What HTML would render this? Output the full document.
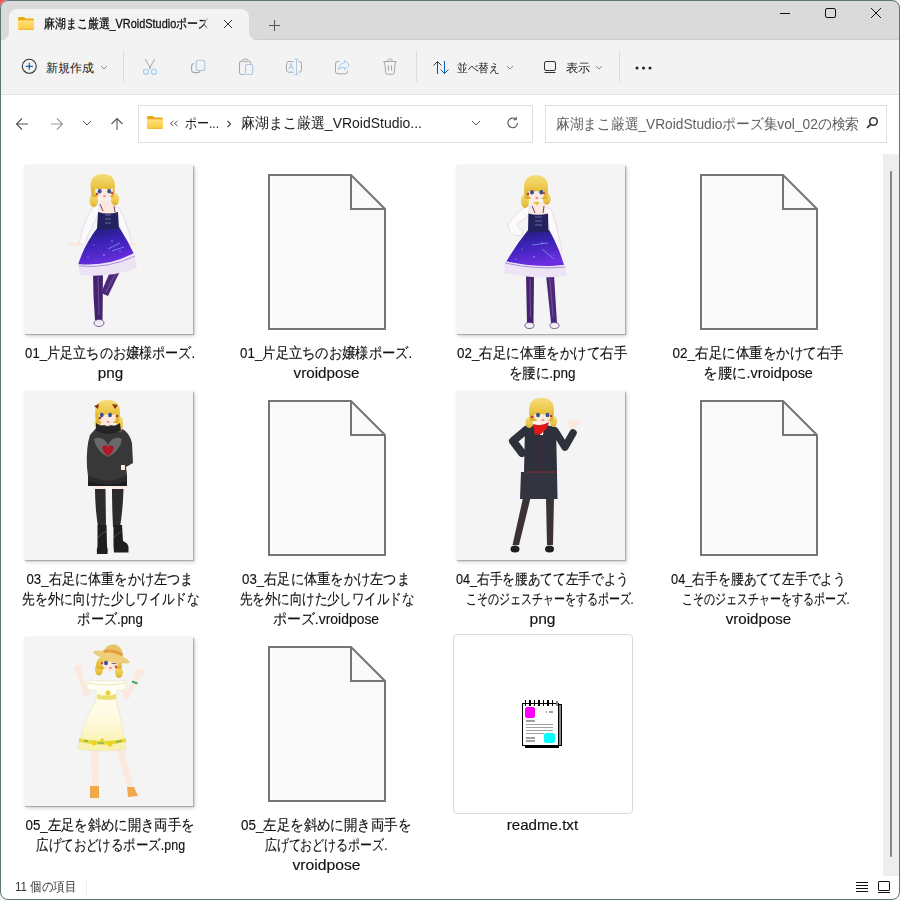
<!DOCTYPE html><html><head><meta charset="utf-8"><style>
*{box-sizing:border-box;margin:0;padding:0}
html,body{width:900px;height:900px;overflow:hidden;background:#eaf4f4}
#corner{position:absolute;left:0;top:0;width:8px;height:8px;background:#f05050}
body{font-family:"Liberation Sans",sans-serif;color:#1b1b1b;position:relative}
#win{position:absolute;left:0;top:0;width:900px;height:900px;border-radius:8px;overflow:hidden;background:#fff}
#frame{position:absolute;left:0;top:0;width:900px;height:900px;border:1px solid #607474;border-radius:8px}
#tabs{position:absolute;left:0;top:0;width:900px;height:40px;background:#dadada;border-bottom:1px solid #cdcdcd}
#tab{position:absolute;left:9px;top:9px;width:240px;height:31px;background:#f3f3f3;border-radius:8px 8px 0 0}
#tab:before,#tab:after{content:"";position:absolute;bottom:0;width:8px;height:8px}
#tab:before{left:-8px;background:radial-gradient(circle at 0 0,transparent 7.5px,#f3f3f3 8.5px)}
#tab:after{right:-8px;background:radial-gradient(circle at 100% 0,transparent 7.5px,#f3f3f3 8.5px)}
#cmd{position:absolute;left:0;top:40px;width:900px;height:55px;background:#f3f3f3;border-bottom:1px solid #e3e3e3}
.box{position:absolute;border:1px solid #dfdfdf;background:#fff}
.t{position:absolute;white-space:nowrap;line-height:20px;transform-origin:0 50%}
.sep{position:absolute;width:1px;background:#dcdcdc}
.lbl{position:absolute;text-align:center;font-size:15px;line-height:20px;color:#111;white-space:nowrap;width:216px;-webkit-text-stroke:0.15px #111}
.thumb{position:absolute;width:169px;height:169px;background:#f4f4f4;box-shadow:1px 1px 1px rgba(0,0,0,.22),2px 2px 4px rgba(0,0,0,.18)}
svg{position:absolute;overflow:visible}
</style></head><body><div id="corner"></div><div id="win">
<div id="tabs"></div><div id="tab"></div><div id="cmd"></div>
<svg style="left:18px;top:17px" width="16" height="13" viewBox="0 0 16 13"><defs><linearGradient id="fg18_17" x1="0" y1="0" x2="0" y2="1"><stop offset="0" stop-color="#ffe17a"/><stop offset="1" stop-color="#fbc93f"/></linearGradient></defs><path d="M0 1.5 Q0 0 1.5 0 H5.2 Q6 0 6.6 0.6 L7.6 1.6 H14.5 Q16 1.6 16 3 V5 H0Z" fill="#e9a90f"/><path d="M0 3.2 H16 V11.5 Q16 13 14.5 13 H1.5 Q0 13 0 11.5Z" fill="url(#fg18_17)"/><path d="M0.6 12.3 H15.4" stroke="#e9b030" stroke-width="1" opacity=".7"/></svg>
<div style="position:absolute;left:44px;top:10px;width:165px;height:28px;overflow:hidden;-webkit-mask-image:linear-gradient(90deg,#000 96%,transparent 100%)"><div class="t" id="ttl" style="left:0px;top:4px;font-size:13px;color:#111;transform:scaleX(0.8397);-webkit-text-stroke:0.3px #111;">麻湖まこ厳選_VRoidStudioポーズ</div></div>
<svg style="left:223px;top:19px" width="10" height="10" viewBox="0 0 10 10"><path d="M1 1L9 9M9 1L1 9" stroke="#333" stroke-width="1"/></svg>
<svg style="left:268px;top:19px" width="12" height="12" viewBox="0 0 12 12"><path d="M6.5 1V12M1 6.5H12" stroke="#555" stroke-width="1"/></svg>
<svg style="left:779px;top:12px" width="12" height="3" viewBox="0 0 12 3"><path d="M1 1.5H11" stroke="#111" stroke-width="1"/></svg>
<svg style="left:824px;top:7px" width="12" height="12" viewBox="0 0 12 12"><rect x="1.5" y="1.5" width="10" height="9" rx="1.5" fill="none" stroke="#111" stroke-width="1"/></svg>
<svg style="left:870px;top:7px" width="12" height="12" viewBox="0 0 12 12"><path d="M1 1L11 11M11 1L1 11" stroke="#111" stroke-width="1"/></svg>
<svg style="left:21px;top:58px" width="17" height="17" viewBox="0 0 17 17"><circle cx="8.3" cy="8.3" r="7" fill="none" stroke="#333" stroke-width="1.1"/><path d="M8.3 4.8V11.8M4.8 8.3H11.8" stroke="#0a64b4" stroke-width="1.2"/></svg>
<div class="t" id="new" style="left:46px;top:58px;font-size:12px;color:#1b1b1b;transform:scaleX(1.0000);">新規作成</div>
<svg style="left:100px;top:65px" width="8" height="5.0" viewBox="0 0 8 5.0"><path d="M1 1L4.0 4.0L7 1" fill="none" stroke="#8a8a8a" stroke-width="1"/></svg>
<div class="sep" style="left:123px;top:51px;height:31px"></div>
<svg style="left:142px;top:58px" width="17" height="18" viewBox="0 0 17 18"><path d="M3.3 1L8.6 10.8M12.7 1L7.4 10.8" stroke="#a6a6a6" stroke-width="1" fill="none"/><circle cx="4" cy="13.8" r="2.6" stroke="#a9c8e6" stroke-width="1.1" fill="#eaf3fa"/><circle cx="12" cy="13.8" r="2.6" stroke="#a9c8e6" stroke-width="1.1" fill="#eaf3fa"/></svg>
<svg style="left:190px;top:59px" width="17" height="16" viewBox="0 0 17 16"><path d="M4.2 4.5 Q1.6 5 1.6 7.5 V11 Q1.6 13.6 4.5 13.6 H7.5 Q9.6 13.6 10.2 12" stroke="#a6a6a6" stroke-width="1.05" fill="none"/><rect x="6.2" y="1.3" width="8.6" height="10.2" rx="2.3" stroke="#a9c8e6" stroke-width="1.1" fill="none"/></svg>
<svg style="left:238px;top:58px" width="17" height="18" viewBox="0 0 17 18"><path d="M4.3 3.2 H3.3 Q1.5 3.2 1.5 5 V14.7 Q1.5 16.5 3.3 16.5 H6.6" stroke="#a6a6a6" stroke-width="1" fill="none"/><path d="M10.3 3.2 H11 Q12.8 3.2 12.8 5 V6" stroke="#a6a6a6" stroke-width="1" fill="none"/><rect x="4.5" y="1.3" width="5.6" height="2.4" rx="1.1" stroke="#a6a6a6" stroke-width="1" fill="none"/><rect x="7.5" y="6.5" width="7.2" height="10" rx="1.8" stroke="#a9c8e6" stroke-width="1.1" fill="none"/></svg>
<svg style="left:285px;top:58px" width="18" height="18" viewBox="0 0 18 18"><path d="M8.6 3.5 H3.8 Q1.5 3.5 1.5 5.8 V11.9 Q1.5 14.2 3.8 14.2 H8.6" stroke="#a6a6a6" stroke-width="1" fill="none"/><path d="M13.4 3.5 H14.2 Q16.5 3.5 16.5 5.8 V11.9 Q16.5 14.2 14.2 14.2 H13.4" stroke="#a6a6a6" stroke-width="1" fill="none"/><path d="M11.5 1.5V16.3M9.6 1.2H13.4M9.6 16.6H13.4" stroke="#a9c8e6" stroke-width="1" fill="none"/><path d="M3.6 11.8 L6 5.4 L8.4 11.8 M4.5 9.6H7.5" stroke="#a9c8e6" stroke-width="1" fill="none"/></svg>
<svg style="left:334px;top:59px" width="17" height="16" viewBox="0 0 17 16"><path d="M5.6 2.5 H3.8 Q1.5 2.5 1.5 4.8 V12.5 Q1.5 14.8 3.8 14.8 H11.2 Q13.5 14.8 13.5 12.5 V11.5" stroke="#a6a6a6" stroke-width="1" fill="none"/><path d="M10.6 1.2 L15.4 6 L10.6 10.8 V8.4 Q6.8 8.2 4.2 10.6 Q5 4.6 10.6 3.8Z" stroke="#a9c8e6" stroke-width="1" fill="#edf4fb" stroke-linejoin="round"/></svg>
<svg style="left:382px;top:58px" width="16" height="18" viewBox="0 0 16 18"><path d="M1.2 3.5H14.8M6 3.5V2.3Q6 1 7.3 1H8.7Q10 1 10 2.3V3.5M2.6 3.5L3.8 14.8Q4 16.2 5.4 16.2H10.6Q12 16.2 12.2 14.8L13.4 3.5M6.5 7.4V12.6M9.5 7.4V12.6" stroke="#a6a6a6" stroke-width="1" fill="none"/></svg>
<div class="sep" style="left:416px;top:51px;height:31px"></div>
<svg style="left:432px;top:60px" width="18" height="15" viewBox="0 0 18 15"><path d="M5.5 14V1.5M1.5 5.5L5.5 1.5L9.5 5.5" stroke="#404040" stroke-width="1" fill="none"/><path d="M12.5 1V13.5M8.5 9.5L12.5 13.5L16.5 9.5" stroke="#0a64b4" stroke-width="1" fill="none"/></svg>
<div class="t" id="sort" style="left:457px;top:58px;font-size:12px;color:#1b1b1b;transform:scaleX(0.8958);">並べ替え</div>
<svg style="left:506px;top:65px" width="8" height="5.0" viewBox="0 0 8 5.0"><path d="M1 1L4.0 4.0L7 1" fill="none" stroke="#8a8a8a" stroke-width="1"/></svg>
<svg style="left:543px;top:60px" width="14" height="14" viewBox="0 0 14 14"><rect x="1.5" y="1.5" width="11" height="9" rx="1.5" fill="none" stroke="#333" stroke-width="1"/><path d="M1.5 12.5H12.5" stroke="#333" stroke-width="1"/></svg>
<div class="t" id="view" style="left:566px;top:58px;font-size:12px;color:#1b1b1b;transform:scaleX(1.0167);">表示</div>
<svg style="left:595px;top:65px" width="8" height="5.0" viewBox="0 0 8 5.0"><path d="M1 1L4.0 4.0L7 1" fill="none" stroke="#8a8a8a" stroke-width="1"/></svg>
<div class="sep" style="left:619px;top:51px;height:31px"></div>
<svg style="left:635px;top:66px" width="18" height="4" viewBox="0 0 18 4"><circle cx="2" cy="2" r="1.5" fill="#222"/><circle cx="8.5" cy="2" r="1.5" fill="#222"/><circle cx="15" cy="2" r="1.5" fill="#222"/></svg>
<svg style="left:15px;top:117px" width="14" height="14" viewBox="0 0 14 14"><path d="M13 7H1.5M7 1.5L1.5 7L7 12.5" stroke="#555" stroke-width="1.1" fill="none"/></svg>
<svg style="left:50px;top:117px" width="14" height="14" viewBox="0 0 14 14"><path d="M1 7H12.5M7 1.5L12.5 7L7 12.5" stroke="#9a9a9a" stroke-width="1.1" fill="none"/></svg>
<svg style="left:82px;top:120px" width="10" height="6.0" viewBox="0 0 10 6.0"><path d="M1 1L5.0 5.0L9 1" fill="none" stroke="#555" stroke-width="1"/></svg>
<svg style="left:110px;top:117px" width="14" height="14" viewBox="0 0 14 14"><path d="M7 13V1.5M1.5 7L7 1.5L12.5 7" stroke="#555" stroke-width="1.1" fill="none"/></svg>
<div class="box" style="left:138px;top:105px;width:395px;height:38px"></div>
<svg style="left:147px;top:116px" width="16" height="13" viewBox="0 0 16 13"><defs><linearGradient id="fg147_116" x1="0" y1="0" x2="0" y2="1"><stop offset="0" stop-color="#ffe17a"/><stop offset="1" stop-color="#fbc93f"/></linearGradient></defs><path d="M0 1.5 Q0 0 1.5 0 H5.2 Q6 0 6.6 0.6 L7.6 1.6 H14.5 Q16 1.6 16 3 V5 H0Z" fill="#e9a90f"/><path d="M0 3.2 H16 V11.5 Q16 13 14.5 13 H1.5 Q0 13 0 11.5Z" fill="url(#fg147_116)"/><path d="M0.6 12.3 H15.4" stroke="#e9b030" stroke-width="1" opacity=".7"/></svg>
<svg style="left:169px;top:120px" width="10" height="7" viewBox="0 0 10 7"><path d="M4.5 1L1.5 3.5L4.5 6M8.5 1L5.5 3.5L8.5 6" fill="none" stroke="#555" stroke-width="1"/></svg>
<div class="t" id="bc1" style="left:185px;top:113px;font-size:14px;color:#1b1b1b;transform:scaleX(0.8570);">ポー...</div>
<svg style="left:226px;top:120px" width="6" height="8" viewBox="0 0 6 8"><path d="M1.5 1L4.5 4L1.5 7" fill="none" stroke="#444" stroke-width="1.1"/></svg>
<div class="t" id="addrtxt" style="left:241px;top:113px;font-size:15px;color:#1b1b1b;transform:scaleX(0.9319);">麻湖まこ厳選_VRoidStudio...</div>
<svg style="left:471px;top:120px" width="10" height="6.0" viewBox="0 0 10 6.0"><path d="M1 1L5.0 5.0L9 1" fill="none" stroke="#555" stroke-width="1"/></svg>
<svg style="left:506px;top:116px" width="14" height="14" viewBox="0 0 14 14"><path d="M11.5 7 A4.8 4.8 0 1 1 9.8 3.2" stroke="#555" stroke-width="1.1" fill="none"/><path d="M10.2 1 V3.8 H7.4" stroke="#555" stroke-width="1.1" fill="none"/></svg>
<div class="box" style="left:545px;top:105px;width:342px;height:38px"></div>
<div class="t" id="srch" style="left:556px;top:114px;font-size:15px;color:#5f5f5f;transform:scaleX(0.9156);">麻湖まこ厳選_VRoidStudioポーズ集vol_02の検索</div>
<svg style="left:866px;top:116px" width="13" height="13" viewBox="0 0 13 13"><circle cx="7.5" cy="5.5" r="3.8" stroke="#333" stroke-width="1.6" fill="none"/><path d="M4.8 8.2L1.2 11.8" stroke="#333" stroke-width="1.8"/></svg>
<div style="position:absolute;left:883px;top:154px;width:16px;height:722px;background:#eeeeee"></div>
<div style="position:absolute;left:890px;top:171px;width:2px;height:686px;background:#858585;border-radius:1px"></div>
<div class="thumb" style="left:24.0px;top:165px"><svg style="left:0;top:0" width="170" height="170" viewBox="0 0 170 170"><defs><linearGradient id="gal1" x1="0" y1="0" x2="0.3" y2="1"><stop offset="0" stop-color="#1e1c6a"/><stop offset=".45" stop-color="#3a22b4"/><stop offset="1" stop-color="#6a2ee0"/></linearGradient></defs><path d="M76 40 L69 42 Q62 52 58 66 Q56 74 55 79 L60 80 Q64 70 68 62 L74 50Z" fill="#fcf9fc" stroke="#ddd3dd" stroke-width=".7"/><path d="M88 41 L95 43 Q101 53 104 64 Q107 73 108 79 L103 80 Q100 71 96 62 L91 52Z" fill="#fcf9fc" stroke="#ddd3dd" stroke-width=".7"/><path d="M45 78 L58 77 L58 81 L46 81Z" fill="#fbe9e0"/><path d="M103 77 L114 78 L113 81 L103 81Z" fill="#fbe9e0"/><path d="M76 35 L90 35 L92 49 L75 49Z" fill="#fbe9e0"/><path d="M76 39 L79 46 M90 41 L91 47" stroke="#7a3a70" stroke-width="1"/><defs><linearGradient id="hg1" x1="0" y1="0" x2="0" y2="1"><stop offset="0" stop-color="#f4dc78"/><stop offset=".6" stop-color="#ecc84a"/><stop offset="1" stop-color="#dcae2e"/></linearGradient></defs><ellipse cx="69.75" cy="35.5" rx="4.25" ry="6.5" fill="url(#hg1)"/><ellipse cx="91.0" cy="34.25" rx="4.0" ry="6.25" fill="url(#hg1)"/><path d="M66.5 21 Q66.5 9 78.75 9 Q91 9 91 21 L90 32 L67.5 32Z" fill="url(#hg1)"/><path d="M71 21.5 L89 21.5 L88.5 29 Q83.0 35 80.0 35 Q77.0 35 71.5 29Z" fill="#fbe9e0"/><path d="M67.0 27.5 Q66.5 10 78.75 9.5 Q91 10 90.5 27.5 L89 23.5 L84.0 24.5 L80.0 23.5 L76.0 24.5 L71 23.5Z" fill="url(#hg1)"/><ellipse cx="75.7" cy="26.3" rx="1.9" ry="2.3" fill="#34508a"/><ellipse cx="85.2" cy="26.3" rx="1.9" ry="2.3" fill="#34508a"/><ellipse cx="80.5" cy="31" rx="1.5" ry="0.9" fill="#e88a8a"/><circle cx="73" cy="29" r="1.3" fill="#b84050"/><circle cx="88" cy="28" r="1.3" fill="#b84050"/><path d="M69 107 L79 107 L78.5 155 L71 155 Q69 130 69 107Z" fill="#44226e"/><path d="M74 112 L75 150" stroke="#7a5aa8" stroke-width="1.2" opacity=".7"/><path d="M88 102 L98 102 L84 131 L77 128Z" fill="#4c2878"/><path d="M93 106 L82 127" stroke="#7a5aa8" stroke-width="1.2" opacity=".7"/><ellipse cx="75" cy="158" rx="5" ry="3.5" fill="#f2eef6" stroke="#5a3a7a" stroke-width=".8"/><path d="M74 62 L95 62 Q104 76 110 89 L111 99 Q84 104 54 100 Q60 80 74 62Z" fill="url(#gal1)"/><g fill="#c8c0ff" opacity=".8"><circle cx="70" cy="80" r=".6"/><circle cx="88" cy="76" r=".7"/><circle cx="96" cy="86" r=".6"/><circle cx="64" cy="92" r=".6"/><circle cx="80" cy="90" r=".8"/><circle cx="102" cy="94" r=".6"/></g><path d="M84 84 L96 78 M88 86 L100 82" stroke="#80a8f0" stroke-width="1" opacity=".7"/><path d="M74 47 Q84 50 94 47 L95 64 L73 64Z" fill="#24225e"/><path d="M81 50 L87 50 M81 54 L87 54 M81 58 L87 58" stroke="#7c82b8" stroke-width=".8"/><path d="M54 99 Q84 102 110 88 L113 103 Q86 113 56 110Z" fill="#ece4f4"/><path d="M55 101 Q84 104 111 91" stroke="#a890d8" stroke-width="1" fill="none"/></svg></div>
<div class="lbl" style="left:2.5px;top:343px"><span id="L000" style="display:inline-block;transform-origin:50% 50%;transform:scaleX(0.8754);">01_片足立ちのお嬢様ポーズ.</span></div>
<div class="lbl" style="left:2.5px;top:363px"><span id="L001" style="display:inline-block;transform-origin:50% 50%;transform:scaleX(1.0147);">png</span></div>
<svg style="left:268.0px;top:174px" width="118" height="156" viewBox="0 0 118 156"><path d="M1 1H83L117 35V155H1Z" fill="#fafafa" stroke="#757575" stroke-width="2" stroke-linejoin="miter"/><path d="M83 1V35H117" fill="none" stroke="#757575" stroke-width="2"/></svg>
<div class="lbl" style="left:218.5px;top:343px"><span id="L100" style="display:inline-block;transform-origin:50% 50%;transform:scaleX(0.8857);">01_片足立ちのお嬢様ポーズ.</span></div>
<div class="lbl" style="left:218.5px;top:363px"><span id="L101" style="display:inline-block;transform-origin:50% 50%;transform:scaleX(1.0147);">vroidpose</span></div>
<div class="thumb" style="left:456.0px;top:165px"><svg style="left:0;top:0" width="170" height="170" viewBox="0 0 170 170"><defs><linearGradient id="gal2" x1="0" y1="0" x2="0.3" y2="1"><stop offset="0" stop-color="#1e1c6a"/><stop offset=".45" stop-color="#3a22b4"/><stop offset="1" stop-color="#6a2ee0"/></linearGradient></defs><path d="M74 40 L66 44 Q56 52 52 59 Q52 66 58 70 L66 71 L67 65 Q60 63 62 58 L72 52Z" fill="#fcf9fc" stroke="#ddd3dd" stroke-width=".7"/><path d="M88 42 L95 44 Q100 56 102 68 Q104 78 106 85 L100 86 Q97 76 94 66 L90 54Z" fill="#fcf9fc" stroke="#ddd3dd" stroke-width=".7"/><path d="M100 84 L106 84 L106 88 L101 88Z" fill="#fbe9e0"/><path d="M75 37 L89 37 L90 49 L74 49Z" fill="#fbe9e0"/><path d="M76 41 L79 48 M88 41 L87 48" stroke="#7a3a70" stroke-width="1"/><defs><linearGradient id="hg2" x1="0" y1="0" x2="0" y2="1"><stop offset="0" stop-color="#f4dc78"/><stop offset=".6" stop-color="#ecc84a"/><stop offset="1" stop-color="#dcae2e"/></linearGradient></defs><ellipse cx="69.0" cy="36.0" rx="4.0" ry="7.0" fill="url(#hg2)"/><ellipse cx="90.7" cy="33.85" rx="4.0" ry="5.850000000000001" fill="url(#hg2)"/><path d="M68 22.3 Q68 10.3 80.0 10.3 Q92 10.3 92 22.3 L91 34 L69 34Z" fill="url(#hg2)"/><path d="M72.4 24 L88.4 24 L87.9 31 Q83.4 37 80.4 37 Q77.4 37 72.9 31Z" fill="#fbe9e0"/><path d="M68.5 30 Q68 11.3 80.0 10.8 Q92 11.3 91.5 30 L88.4 26 L84.4 27 L80.4 26 L76.4 27 L72.4 26Z" fill="url(#hg2)"/><ellipse cx="76" cy="27.2" rx="1.9" ry="2.3" fill="#34508a"/><ellipse cx="85.3" cy="27.2" rx="1.9" ry="2.3" fill="#34508a"/><ellipse cx="80.9" cy="33" rx="1.5" ry="0.9" fill="#e88a8a"/><circle cx="72" cy="29" r="1.3" fill="#b84050"/><circle cx="87.7" cy="28" r="1.3" fill="#b84050"/><path d="M77 37 L84 37 L81 40.5Z" fill="#e8c040"/><path d="M70 110 L78 110 L77.5 158 L71 158Z" fill="#44226e"/><path d="M90 110 L98 110 L101 158 L95 158Z" fill="#4c2878"/><path d="M74 114 L74.5 152 M94 114 L97 152" stroke="#7a5aa8" stroke-width="1.2" opacity=".7"/><ellipse cx="73.5" cy="160.5" rx="4.5" ry="3" fill="#f2eef6" stroke="#5a3a7a" stroke-width=".8"/><ellipse cx="98.5" cy="160.5" rx="4.5" ry="3" fill="#f2eef6" stroke="#5a3a7a" stroke-width=".8"/><path d="M72 65 L93 65 Q102 80 108 100 Q80 104 50 97 Q60 80 72 65Z" fill="url(#gal2)"/><g fill="#c8c0ff" opacity=".8"><circle cx="66" cy="84" r=".6"/><circle cx="86" cy="78" r=".7"/><circle cx="98" cy="90" r=".6"/><circle cx="60" cy="94" r=".6"/><circle cx="78" cy="92" r=".8"/></g><path d="M76 80 L92 78 M86 84 L98 94" stroke="#80a8f0" stroke-width="1" opacity=".7"/><path d="M72.4 48.5 Q82 51 92 48.5 L92.5 67 L72 67Z" fill="#24225e"/><path d="M79 52 L86 52 M79 56 L86 56 M79 60 L86 60" stroke="#7c82b8" stroke-width=".8"/><path d="M49 96 Q80 103 109 100 L111 111 Q80 115 48 108Z" fill="#ece4f4"/><path d="M49 98 Q80 105 109 102" stroke="#a890d8" stroke-width="1" fill="none"/></svg></div>
<div class="lbl" style="left:434.5px;top:343px"><span id="L200" style="display:inline-block;transform-origin:50% 50%;transform:scaleX(0.8946);">02_右足に体重をかけて右手</span></div>
<div class="lbl" style="left:434.5px;top:363px"><span id="L201" style="display:inline-block;transform-origin:50% 50%;transform:scaleX(0.9029);">を腰に.png</span></div>
<svg style="left:700.0px;top:174px" width="118" height="156" viewBox="0 0 118 156"><path d="M1 1H83L117 35V155H1Z" fill="#fafafa" stroke="#757575" stroke-width="2" stroke-linejoin="miter"/><path d="M83 1V35H117" fill="none" stroke="#757575" stroke-width="2"/></svg>
<div class="lbl" style="left:650.5px;top:343px"><span id="L300" style="display:inline-block;transform-origin:50% 50%;transform:scaleX(0.8999);">02_右足に体重をかけて右手</span></div>
<div class="lbl" style="left:650.5px;top:363px"><span id="L301" style="display:inline-block;transform-origin:50% 50%;transform:scaleX(0.9587);">を腰に.vroidpose</span></div>
<div class="thumb" style="left:24.0px;top:391px"><svg style="left:0;top:0" width="170" height="170" viewBox="0 0 170 170"><path d="M71 93 L81 93 L81 99 L71 99Z M88 93 L99 93 L99 99 L88 99Z" fill="#fbe9e0"/><path d="M71 98 L81.5 98 L82 136 L74 136 Q71 116 71 98Z" fill="#2c2a2a"/><path d="M88 98 L99.5 98 Q99 118 96 136 L89 136 Q88 116 88 98Z" fill="#2c2a2a"/><path d="M73.5 134 L82.5 134 L83 155 Q84 158 83.5 163 L73 163 Q72.5 158 73.5 155Z" fill="#1e1e1e"/><path d="M89.5 134 L98 134 L99 150 Q104 152 104.5 156 L104.5 161.5 L90 161.5 L89.5 155Z" fill="#1e1e1e"/><path d="M74 146 L82 140 M90 146 L97 140" stroke="#5a5a5a" stroke-width=".8"/><path d="M64 84 L103 84 L103 95 L64 95Z" fill="#1e1e22"/><path d="M73 36 Q84 31 97 37 Q106 42 108 52 L109 72 L102 76 L103 84 Q98 92 84 93 Q70 92 64 85 L63 76 Q62 56 66 44Z" fill="#383838"/><path d="M97 74 L101 74 L101 79 L97 79Z" fill="#fbe9e0"/><path d="M64 84 Q84 95 103 84 L103 90 Q84 97 64 90Z" fill="#2a2a2a"/><path d="M70 48 Q79 44 84 54 Q89 44 98 48 Q96 60 84 66 Q72 60 70 48Z" fill="#7a7a7a" opacity=".75"/><path d="M78 56 Q83 52 84 57 Q85 52 90 56 Q89 62 84 65 Q79 62 78 56Z" fill="#b01828"/><defs><linearGradient id="hg3" x1="0" y1="0" x2="0" y2="1"><stop offset="0" stop-color="#f4dc78"/><stop offset=".6" stop-color="#ecc84a"/><stop offset="1" stop-color="#dcae2e"/></linearGradient></defs><ellipse cx="73.75" cy="32.5" rx="3.25" ry="5.5" fill="url(#hg3)"/><ellipse cx="95.5" cy="33.0" rx="3.5" ry="8.0" fill="url(#hg3)"/><path d="M71 21 Q71 9 83.5 9 Q96 9 96 21 L95 32 L72 32Z" fill="url(#hg3)"/><path d="M75 21 L92 21 L91.5 29 Q86.5 35 83.5 35 Q80.5 35 75.5 29Z" fill="#fbe9e0"/><path d="M71.5 27 Q71 10 83.5 9.5 Q96 10 95.5 27 L92 23 L87.5 24 L83.5 23 L79.5 24 L75 23Z" fill="url(#hg3)"/><ellipse cx="77.8" cy="24" rx="1.9" ry="2.3" fill="#34508a"/><ellipse cx="86" cy="24" rx="1.9" ry="2.3" fill="#34508a"/><ellipse cx="84.0" cy="31" rx="1.5" ry="0.9" fill="#e88a8a"/><circle cx="76" cy="27" r="1.3" fill="#9a3820"/><circle cx="93" cy="25" r="1.3" fill="#9a3820"/><path d="M72 32 Q84 40 96 32 L97 40 Q84 46 72 40Z" fill="#242424"/><path d="M70 15 L75 13 L74 18Z M88 13 L94 14 L91 18Z" fill="#8a3018"/></svg></div>
<div class="lbl" style="left:2.5px;top:569px"><span id="L010" style="display:inline-block;transform-origin:50% 50%;transform:scaleX(0.8788);">03_右足に体重をかけ左つま</span></div>
<div class="lbl" style="left:2.5px;top:589px"><span id="L011" style="display:inline-block;transform-origin:50% 50%;transform:scaleX(0.8429);">先を外に向けた少しワイルドな</span></div>
<div class="lbl" style="left:2.5px;top:609px"><span id="L012" style="display:inline-block;transform-origin:50% 50%;transform:scaleX(0.8827);">ポーズ.png</span></div>
<svg style="left:268.0px;top:400px" width="118" height="156" viewBox="0 0 118 156"><path d="M1 1H83L117 35V155H1Z" fill="#fafafa" stroke="#757575" stroke-width="2" stroke-linejoin="miter"/><path d="M83 1V35H117" fill="none" stroke="#757575" stroke-width="2"/></svg>
<div class="lbl" style="left:218.5px;top:569px"><span id="L110" style="display:inline-block;transform-origin:50% 50%;transform:scaleX(0.8841);">03_右足に体重をかけ左つま</span></div>
<div class="lbl" style="left:218.5px;top:589px"><span id="L111" style="display:inline-block;transform-origin:50% 50%;transform:scaleX(0.8333);">先を外に向けた少しワイルドな</span></div>
<div class="lbl" style="left:218.5px;top:609px"><span id="L112" style="display:inline-block;transform-origin:50% 50%;transform:scaleX(0.9280);">ポーズ.vroidpose</span></div>
<div class="thumb" style="left:456.0px;top:391px"><svg style="left:0;top:0" width="170" height="170" viewBox="0 0 170 170"><path d="M67 107 L74.5 107 L63 154 L56.5 154Z" fill="#3a3234"/><path d="M90 107 L98 107 L97 154 L91 154Z" fill="#3a3234"/><ellipse cx="59" cy="158" rx="4.5" ry="3.5" fill="#1e1e22"/><ellipse cx="93.5" cy="158" rx="4.5" ry="3.5" fill="#1e1e22"/><path d="M65 81 L101 81 L101.5 108 L64 108Z" fill="#32343f"/><path d="M64 60 L71 60 L71 66 L65 65Z" fill="#fbe9e0"/><path d="M70 39 L57 50 L66 62" fill="none" stroke="#2e313c" stroke-width="8" stroke-linecap="round" stroke-linejoin="round"/><path d="M112 31 Q118 27 124 30 L121 36 L118 41 L113 40Z" fill="#fbe9e0"/><path d="M99 40 L109 56 L117 42" fill="none" stroke="#2e313c" stroke-width="7.5" stroke-linecap="round" stroke-linejoin="round"/><path d="M69 36 Q84 32 100 36 L101 81 L68 81Z" fill="#2e313c"/><path d="M69 81 L101 81" stroke="#8a2a36" stroke-width="1"/><path d="M86 44 L86 80 M80 52 L80 78" stroke="#5a2a36" stroke-width=".7"/><path d="M83 34 L88 34 L87 44 L84 44Z" fill="#fafafa"/><defs><linearGradient id="hg4" x1="0" y1="0" x2="0" y2="1"><stop offset="0" stop-color="#f4dc78"/><stop offset=".6" stop-color="#ecc84a"/><stop offset="1" stop-color="#dcae2e"/></linearGradient></defs><ellipse cx="73.25" cy="31.5" rx="3.75" ry="5.5" fill="url(#hg4)"/><ellipse cx="97.5" cy="30.5" rx="3.5" ry="5.5" fill="url(#hg4)"/><path d="M73 19 Q73 7 85.5 7 Q98 7 98 19 L97 30 L74 30Z" fill="url(#hg4)"/><path d="M78 21 L95 21 L94.5 27 Q89.5 33 86.5 33 Q83.5 33 78.5 27Z" fill="#fbe9e0"/><path d="M73.5 27 Q73 8 85.5 7.5 Q98 8 97.5 27 L95 23 L90.5 24 L86.5 23 L82.5 24 L78 23Z" fill="url(#hg4)"/><ellipse cx="82" cy="24" rx="1.9" ry="2.3" fill="#34508a"/><ellipse cx="91.5" cy="24" rx="1.9" ry="2.3" fill="#34508a"/><ellipse cx="87.0" cy="29" rx="1.5" ry="0.9" fill="#e88a8a"/><circle cx="76" cy="26" r="1.3" fill="#c03040"/><circle cx="95" cy="25" r="1.3" fill="#c03040"/><path d="M77 33 Q85 36 93 31 L91 37 L85 43 L79 44 L78 38Z" fill="#e01818"/></svg></div>
<div class="lbl" style="left:434.5px;top:569px"><span id="L210" style="display:inline-block;transform-origin:50% 50%;transform:scaleX(0.8438);">04_右手を腰あてて左手でよう</span></div>
<div class="lbl" style="left:434.5px;top:589px"><span id="L211" style="display:inline-block;transform-origin:50% 50%;transform:scaleX(0.7331);">こそのジェスチャーをするポーズ.</span></div>
<div class="lbl" style="left:434.5px;top:609px"><span id="L212" style="display:inline-block;transform-origin:50% 50%;transform:scaleX(1.0387);">png</span></div>
<svg style="left:700.0px;top:400px" width="118" height="156" viewBox="0 0 118 156"><path d="M1 1H83L117 35V155H1Z" fill="#fafafa" stroke="#757575" stroke-width="2" stroke-linejoin="miter"/><path d="M83 1V35H117" fill="none" stroke="#757575" stroke-width="2"/></svg>
<div class="lbl" style="left:650.5px;top:569px"><span id="L310" style="display:inline-block;transform-origin:50% 50%;transform:scaleX(0.8535);">04_右手を腰あてて左手でよう</span></div>
<div class="lbl" style="left:650.5px;top:589px"><span id="L311" style="display:inline-block;transform-origin:50% 50%;transform:scaleX(0.7331);">こそのジェスチャーをするポーズ.</span></div>
<div class="lbl" style="left:650.5px;top:609px"><span id="L312" style="display:inline-block;transform-origin:50% 50%;transform:scaleX(1.0070);">vroidpose</span></div>
<div class="thumb" style="left:24.0px;top:637px"><svg style="left:0;top:0" width="170" height="170" viewBox="0 0 170 170"><defs><linearGradient id="dr5" x1="0" y1="0" x2="0" y2="1"><stop offset="0" stop-color="#fffef8"/><stop offset=".5" stop-color="#fefbe2"/><stop offset="1" stop-color="#f9f0a8"/></linearGradient></defs><path d="M54 32 L62 58 L69 46" fill="none" stroke="#fbe9e0" stroke-width="5" stroke-linecap="round" stroke-linejoin="round"/><path d="M115 37 L103 60 L97 47" fill="none" stroke="#fbe9e0" stroke-width="5" stroke-linecap="round" stroke-linejoin="round"/><ellipse cx="54" cy="32" rx="4" ry="4.5" fill="#fbe9e0"/><ellipse cx="115" cy="36" rx="4.5" ry="4.5" fill="#fbe9e0"/><path d="M108 44.5 L113.5 46.5" stroke="#3aaa70" stroke-width="2"/><path d="M67 110 L75 110 L74.5 150 L68 150Z" fill="#fbe9e0"/><path d="M92 110 L100 110 L109 150 L103 150Z" fill="#fbe9e0"/><path d="M66 149 L75 149 L75 161 L66 161Z" fill="#f0a848"/><path d="M103 150 L110 150 L114 159 L104 160Z" fill="#f0a848"/><path d="M63 45 Q67 42 72 44 L92 44 Q97 42 102 45 L102 52 Q98 54 93 53 L92 63 Q99 88 102 112 Q80 116 54 112 Q58 88 72 63 L72 53 Q67 54 63 52Z" fill="url(#dr5)" stroke="#e8e2c0" stroke-width=".6"/><path d="M64 46 Q82 50 101 46" stroke="#eee8b0" stroke-width="1" fill="none"/><path d="M73 57 Q82 60 92 57 L92 62 Q82 64 73 62Z" fill="#ece070"/><circle cx="84" cy="56" r="2.5" fill="#e8d030"/><path d="M55 103 Q80 109 102 103" stroke="#e8d838" stroke-width="3.5" fill="none"/><circle cx="70" cy="106" r="2.5" fill="#f0d020"/><circle cx="86" cy="107" r="2.5" fill="#f0d020"/><circle cx="78" cy="103" r="1.8" fill="#f0d020"/><path d="M60 104 L64 104 M74 106 L80 106 M92 105 L98 104" stroke="#4aa870" stroke-width="1.2"/><defs><linearGradient id="hg5" x1="0" y1="0" x2="0" y2="1"><stop offset="0" stop-color="#f4dc78"/><stop offset=".6" stop-color="#ecc84a"/><stop offset="1" stop-color="#dcae2e"/></linearGradient></defs><ellipse cx="75.0" cy="32.25" rx="4.0" ry="6.25" fill="url(#hg5)"/><ellipse cx="95.0" cy="35.35" rx="4.0" ry="5.65" fill="url(#hg5)"/><path d="M72 30 Q72 18 85.0 18 Q98 18 98 30 L97 32 L73 32Z" fill="url(#hg5)"/><path d="M78 22 L94 22 L93.5 29 Q89.0 35 86.0 35 Q83.0 35 78.5 29Z" fill="#fbe9e0"/><path d="M72.5 28 Q72 19 85.0 18.5 Q98 19 97.5 28 L94 24 L90.0 25 L86.0 24 L82.0 25 L78 24Z" fill="url(#hg5)"/><ellipse cx="82" cy="26" rx="1.9" ry="2.3" fill="#34508a"/><path d="M87.5 26 Q90 27.5 92.5 26" stroke="#6a4a40" stroke-width="1" fill="none"/><ellipse cx="86.5" cy="31" rx="1.5" ry="0.9" fill="#e88a8a"/><circle cx="78" cy="26" r="1.3" fill="#d04050"/><circle cx="92" cy="29.7" r="1.3" fill="#d04050"/><path d="M79 18 Q80 7.5 89 7.4 Q99 8 99 21Z" fill="#e8c468"/><ellipse cx="87.5" cy="20" rx="19" ry="4" fill="#eccf78" transform="rotate(16 87.5 20)"/><path d="M79.5 14.5 Q90 12.5 98.5 18" stroke="#eb9a40" stroke-width="3" fill="none"/></svg></div>
<div class="lbl" style="left:2.5px;top:815px"><span id="L020" style="display:inline-block;transform-origin:50% 50%;transform:scaleX(0.8893);">05_左足を斜めに開き両手を</span></div>
<div class="lbl" style="left:2.5px;top:835px"><span id="L021" style="display:inline-block;transform-origin:50% 50%;transform:scaleX(0.8315);">広げておどけるポーズ.png</span></div>
<svg style="left:268.0px;top:646px" width="118" height="156" viewBox="0 0 118 156"><path d="M1 1H83L117 35V155H1Z" fill="#fafafa" stroke="#757575" stroke-width="2" stroke-linejoin="miter"/><path d="M83 1V35H117" fill="none" stroke="#757575" stroke-width="2"/></svg>
<div class="lbl" style="left:218.5px;top:815px"><span id="L120" style="display:inline-block;transform-origin:50% 50%;transform:scaleX(0.8946);">05_左足を斜めに開き両手を</span></div>
<div class="lbl" style="left:218.5px;top:835px"><span id="L121" style="display:inline-block;transform-origin:50% 50%;transform:scaleX(0.7978);">広げておどけるポーズ.</span></div>
<div class="lbl" style="left:218.5px;top:855px"><span id="L122" style="display:inline-block;transform-origin:50% 50%;transform:scaleX(1.0454);">vroidpose</span></div>
<div style="position:absolute;left:453px;top:634px;width:180px;height:180px;border:1px solid #dadada;border-radius:4px"></div>
<div class="lbl" style="left:434.5px;top:815px"><span id="L220" style="display:inline-block;transform-origin:50% 50%;transform:scaleX(1.0074);">readme.txt</span></div>
<svg style="left:522px;top:700px" width="40" height="48" viewBox="0 0 40 48" shape-rendering="crispEdges">
<rect x="0.5" y="3.5" width="36" height="42" rx="1" fill="#fff" stroke="#000"/>
<rect x="36" y="4" width="3.5" height="41" fill="#888" stroke="#000" stroke-width="1"/>
<rect x="3" y="45" width="34" height="3" fill="#000"/>
<g fill="#000"><rect x="2.5" y="0" width="1.6" height="6"/><rect x="7" y="0" width="1.6" height="6"/><rect x="11.5" y="0" width="1.6" height="6"/><rect x="16" y="0" width="1.6" height="6"/><rect x="20.5" y="0" width="1.6" height="6"/><rect x="25" y="0" width="1.6" height="6"/><rect x="29.5" y="0" width="1.6" height="6"/></g><g fill="#888"><rect x="34" y="1" width="1.6" height="5"/></g>
<rect x="3" y="7" width="10" height="11" rx="2.5" fill="#ff00ff"/>
<rect x="22" y="33" width="11" height="10" rx="2.5" fill="#00ffff"/>
<g fill="#a0a0a0"><rect x="4" y="20" width="9" height="1.5"/><rect x="4" y="24" width="27" height="1"/><rect x="4" y="27" width="27" height="1"/><rect x="4" y="30" width="27" height="1"/><rect x="4" y="33" width="18" height="1"/><rect x="4" y="37" width="9" height="1.5"/><rect x="4" y="40" width="9" height="1.5"/><rect x="24" y="11" width="1" height="1.5"/><rect x="27" y="11" width="4" height="1.5"/></g>
</svg>
<div class="t" id="status" style="left:15px;top:877px;font-size:13px;color:#333;transform:scaleX(0.8827);">11 個の項目</div>
<div class="sep" style="left:86px;top:880px;height:15px;background:#eee"></div>
<svg style="left:855px;top:881px" width="14" height="12" viewBox="0 0 14 12"><path d="M1 1.5H13M1 4.5H13M1 7.5H13M1 10.5H13" stroke="#111" stroke-width="1"/></svg>
<svg style="left:877px;top:880px" width="14" height="14" viewBox="0 0 14 14"><rect x="1.5" y="1.5" width="11" height="9" rx=".5" fill="none" stroke="#111" stroke-width="1"/><path d="M1 12.5H13" stroke="#111" stroke-width="1"/></svg>
</div><div id="frame"></div></body></html>
